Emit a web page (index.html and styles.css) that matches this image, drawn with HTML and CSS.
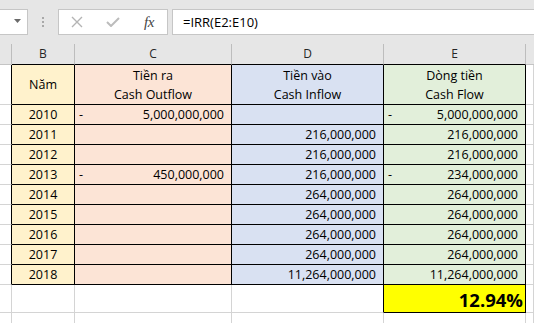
FILE: index.html
```html
<!DOCTYPE html>
<html lang="vi">
<head>
<meta charset="utf-8">
<title>IRR</title>
<link rel="stylesheet" href="styles.css">
</head>
<body>
<div class="toolbar">
  <div class="namebox"><svg class="caret" width="7" height="4" viewBox="0 0 7 4"><path d="M0 0H7L3.5 4Z" fill="#6a6a6a"/></svg></div>
  <svg class="grip" width="2" height="10" viewBox="0 0 2 10"><rect x="0" y="0" width="2" height="2" fill="#a8a8a8"/><rect x="0" y="4" width="2" height="2" fill="#a8a8a8"/><rect x="0" y="8" width="2" height="2" fill="#a8a8a8"/></svg>
  <div class="fbox">
    <span class="ico"><svg width="12" height="12" viewBox="0 0 12 12"><path d="M1 1L11 11M11 1L1 11" stroke="#b4b4b4" stroke-width="1.4" fill="none"/></svg></span>
    <span class="ico"><svg width="14" height="10" viewBox="0 0 14 10"><path d="M1 5L5 9L13 1" stroke="#bcbcbc" stroke-width="2" fill="none"/></svg></span>
    <span class="ico fx">fx</span>
  </div>
  <div class="formula">=IRR(E2:E10)</div>
</div>
<div class="sheet">
  <div class="c h"></div><div class="c h tb">B</div><div class="c h tb">C</div><div class="c h tb">D</div><div class="c h tb">E</div><div class="c h hf"></div>

  <div class="c ta"></div><div class="c t b mid">Năm</div><div class="c t o hdr"><span>Tiền ra</span><span>Cash Outflow</span></div><div class="c t i hdr"><span>Tiền vào</span><span>Cash Inflow</span></div><div class="c t f hdr"><span>Dòng tiền</span><span>Cash Flow</span></div><div class="c"></div>

  <div class="c ta"></div><div class="c t b">2010</div><div class="c t o num"><span>-</span><span class="v">5,000,000,000</span></div><div class="c t i num"></div><div class="c t f num"><span>-</span><span class="v">5,000,000,000</span></div><div class="c"></div>

  <div class="c ta"></div><div class="c t b">2011</div><div class="c t o num"></div><div class="c t i num"><span class="v">216,000,000</span></div><div class="c t f num"><span class="v">216,000,000</span></div><div class="c"></div>

  <div class="c ta"></div><div class="c t b">2012</div><div class="c t o num"></div><div class="c t i num"><span class="v">216,000,000</span></div><div class="c t f num"><span class="v">216,000,000</span></div><div class="c"></div>

  <div class="c ta"></div><div class="c t b">2013</div><div class="c t o num"><span>-</span><span class="v">450,000,000</span></div><div class="c t i num"><span class="v">216,000,000</span></div><div class="c t f num"><span>-</span><span class="v">234,000,000</span></div><div class="c"></div>

  <div class="c ta"></div><div class="c t b">2014</div><div class="c t o num"></div><div class="c t i num"><span class="v">264,000,000</span></div><div class="c t f num"><span class="v">264,000,000</span></div><div class="c"></div>

  <div class="c ta"></div><div class="c t b">2015</div><div class="c t o num"></div><div class="c t i num"><span class="v">264,000,000</span></div><div class="c t f num"><span class="v">264,000,000</span></div><div class="c"></div>

  <div class="c ta"></div><div class="c t b">2016</div><div class="c t o num"></div><div class="c t i num"><span class="v">264,000,000</span></div><div class="c t f num"><span class="v">264,000,000</span></div><div class="c"></div>

  <div class="c ta"></div><div class="c t b">2017</div><div class="c t o num"></div><div class="c t i num"><span class="v">264,000,000</span></div><div class="c t f num"><span class="v">264,000,000</span></div><div class="c"></div>

  <div class="c ta"></div><div class="c t b">2018</div><div class="c t o num"></div><div class="c t i num"><span class="v">11,264,000,000</span></div><div class="c t f num"><span class="v">11,264,000,000</span></div><div class="c"></div>

  <div class="c"></div><div class="c"></div><div class="c"></div><div class="c dr"></div><div class="c pct">12.94%</div><div class="c"></div>

  <div class="c"></div><div class="c"></div><div class="c"></div><div class="c"></div><div class="c"></div><div class="c"></div>
</div>
</body>
</html>
```
FILE: styles.css
```css
html, body {
  margin: 0;
  padding: 0;
}
body {
  width: 534px;
  height: 323px;
  overflow: hidden;
  background: #ffffff;
  font-family: "Open Sans", "Liberation Sans", sans-serif;
}

/* formula bar */
.toolbar {
  height: 44px;
  box-sizing: border-box;
  padding-top: 9px;
  background: #e6e6e6;
  display: flex;
  align-items: flex-start;
}
.namebox {
  width: 28px;
  height: 26px;
  box-sizing: border-box;
  background: #ffffff;
  border: 1px solid #c6c6c6;
  border-left: none;
  display: flex;
  justify-content: flex-end;
  align-items: center;
  padding-right: 6px;
}
.caret {
  display: block;
  margin-bottom: 2px;
}
.grip {
  display: block;
  margin-left: 14px;
  margin-top: 8px;
}
.fbox {
  margin-left: 14px;
  width: 110px;
  height: 26px;
  box-sizing: border-box;
  background: #ffffff;
  border: 1px solid #c6c6c6;
  display: flex;
}
.ico {
  width: 36px;
  display: flex;
  align-items: center;
  justify-content: center;
}
.ico svg {
  display: block;
}
.fx {
  font-family: "Liberation Serif", "DejaVu Serif", serif;
  font-style: italic;
  font-size: 15px;
  color: #454545;
  letter-spacing: -0.5px;
}
.formula {
  margin-left: 4px;
  flex: 1;
  height: 26px;
  box-sizing: border-box;
  background: #ffffff;
  border: 1px solid #c6c6c6;
  border-right: none;
  padding-left: 10px;
  font-size: 13px;
  line-height: 24px;
  color: #000000;
  white-space: nowrap;
}

/* sheet grid */
.sheet {
  display: grid;
  grid-template-columns: 12px 63px 157px 152px 142px 8px;
  grid-template-rows: 21px 40px repeat(9, 20px) 28px 20px;
  font-size: 12.5px;
  color: #000000;
}
.c {
  box-sizing: border-box;
  border-right: 1px solid #d4d4d4;
  border-bottom: 1px solid #d4d4d4;
  line-height: 19px;
  white-space: nowrap;
  overflow: hidden;
}
.h {
  background: #e6e6e6;
  border-right-color: #bdbdbd;
  border-bottom-color: #c4c4c4;
  text-align: center;
  font-size: 12px;
  line-height: 20px;
  color: #262626;
}
.h.tb {
  border-bottom-color: #000000;
}
.h.hf {
  border-right: none;
}
.ta {
  border-right-color: #000000;
}
.t {
  border-right-color: #000000;
  border-bottom-color: #000000;
}
.b {
  background: #fff2cc;
  text-align: center;
}
.o {
  background: #fce4d6;
}
.i {
  background: #d9e1f2;
}
.f {
  background: #e2efda;
}
.mid {
  display: flex;
  align-items: center;
  justify-content: center;
}
.hdr {
  display: flex;
  flex-direction: column;
  justify-content: flex-end;
  align-items: center;
}
.num {
  display: flex;
  align-items: flex-end;
  padding: 0 7px 0 4px;
}
.num .v {
  margin-left: auto;
}
.dr {
  border-right-color: #000000;
}
.pct {
  background: #ffff00;
  border-right-color: #000000;
  border-bottom-color: #000000;
  display: flex;
  align-items: flex-end;
  justify-content: flex-end;
  padding-right: 2px;
  font-weight: 700;
  font-size: 18.5px;
  line-height: 24px;
}
```
